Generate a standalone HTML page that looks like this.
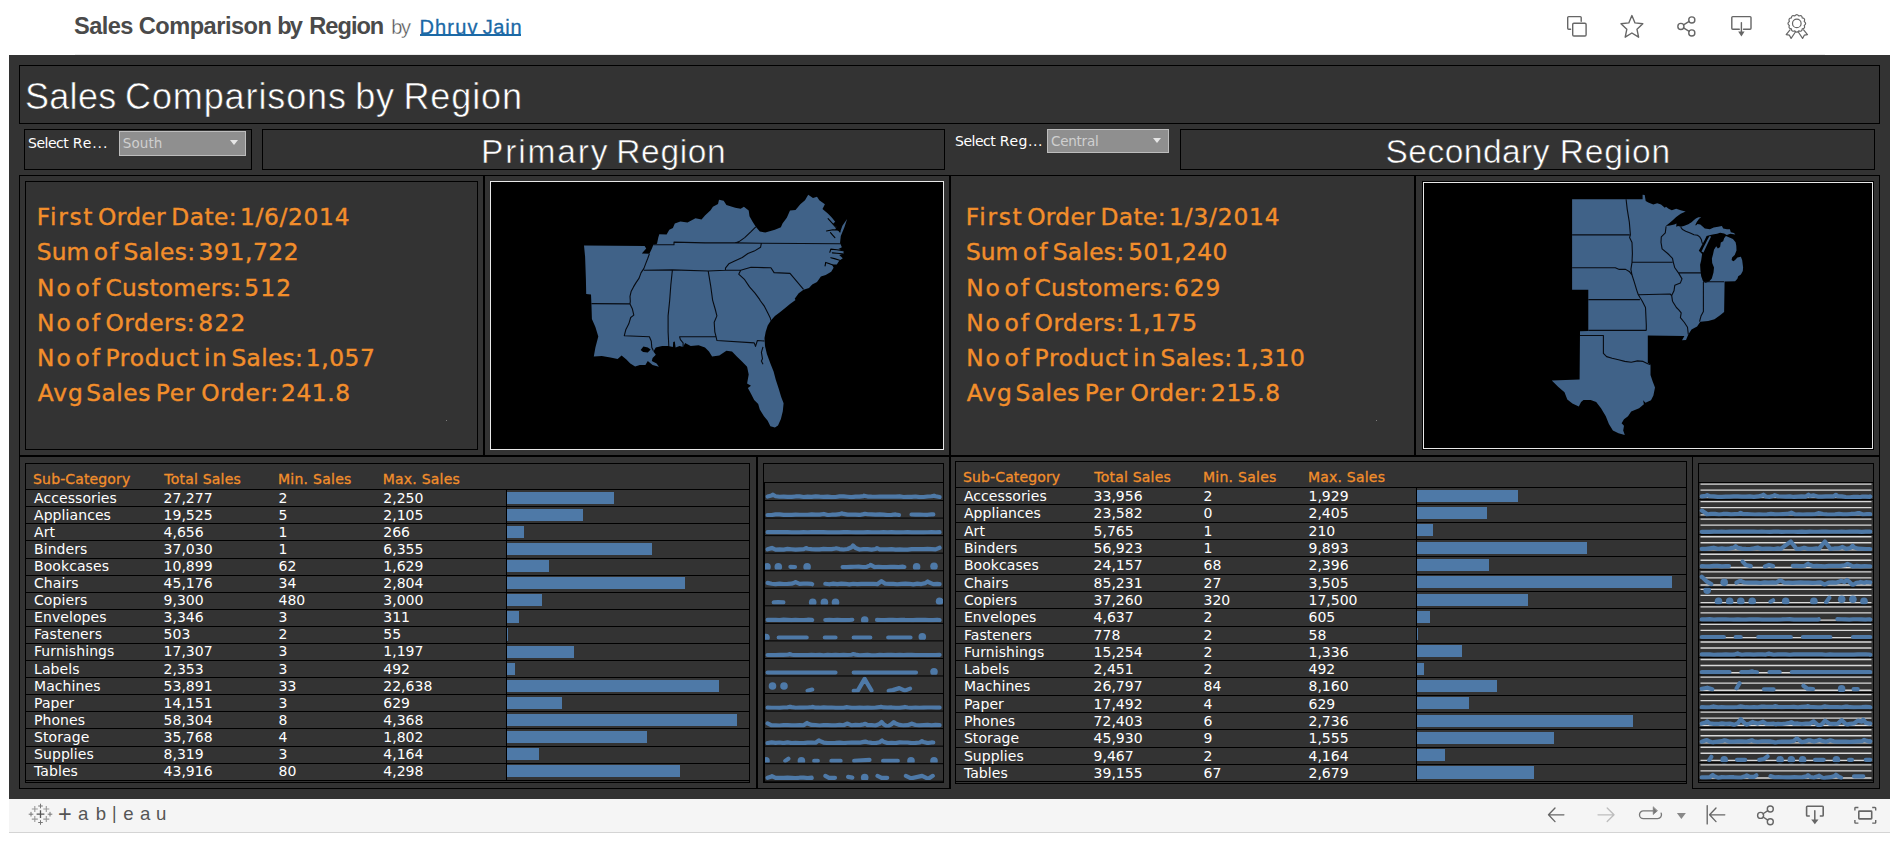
<!DOCTYPE html><html lang="en"><head><meta charset="utf-8"><title>Sales Comparison by Region</title>
<style>

html,body{margin:0;padding:0;}
body{width:1895px;height:850px;background:#fff;position:relative;overflow:hidden;font-family:"Liberation Sans","DejaVu Sans",sans-serif;}
.abs{position:absolute;}
.bx{position:absolute;box-sizing:border-box;border:1px solid #000000;}
.ln{position:absolute;background:#000000;}
.t{position:absolute;white-space:nowrap;line-height:1;}
.t span{position:absolute;top:0;white-space:nowrap;}
.lb{font-family:"Liberation Sans","DejaVu Sans",sans-serif;}
.dj{font-family:"DejaVu Sans","Liberation Sans",sans-serif;}
#dash{position:absolute;left:9px;top:55px;width:1881px;height:744px;background:#333333;}
#foot{position:absolute;left:9px;top:799px;width:1881px;height:33px;background:#f5f5f5;border-bottom:1px solid #d4d4d4;}
.stat{color:#f28e2b;font-size:23.3px;-webkit-text-stroke:0.4px #f28e2b;}
.cell{position:absolute;white-space:nowrap;line-height:1;font-family:"DejaVu Sans","Liberation Sans",sans-serif;font-size:14px;color:#fff;}
.hd{color:#f28e2b;-webkit-text-stroke:0.3px #f28e2b;}
.bar{position:absolute;background:#4e79a7;}
.dd{position:absolute;box-sizing:border-box;background:#8f8f8f;border:1px solid #bdbdbd;}

</style></head><body>
<div class="t  lb" style="left:0;top:14.62px;font-size:23.6px;font-weight:bold;color:#4a4a4a;"><span style="left:74.10px;letter-spacing:-0.571px;">Sales</span> <span style="left:138.70px;letter-spacing:-0.490px;">Comparison</span> <span style="left:277.20px;letter-spacing:-1.730px;">by</span> <span style="left:309.30px;letter-spacing:-0.996px;">Region</span></div>
<div class="t  lb" style="left:0;top:17.07px;font-size:20px;color:#555;-webkit-text-stroke:0.35px #fff;"><span style="left:391.30px;letter-spacing:-1.395px;">by</span></div>
<div class="t  lb" style="left:0;top:17.07px;font-size:20px;color:#1b69a6;-webkit-text-stroke:0.3px #1b69a6;"><span style="left:419.44px;letter-spacing:1.181px;">Dhruv</span> <span style="left:482.64px;letter-spacing:0.740px;">Jain</span></div>
<div class="abs" style="left:420px;top:34.4px;width:101px;height:1.7px;background:#1b69a6;"></div>
<div class="abs" style="left:75px;top:54px;width:1750px;height:1px;background:#ebebeb;"></div>
<div id="dash"></div>
<div class="bx" style="left:19px;top:65px;width:1861px;height:59px;"></div>
<div class="t  lb" style="left:0;top:78.53px;font-size:36px;color:#fff;-webkit-text-stroke:0.55px #333;"><span style="left:25.00px;letter-spacing:0.294px;">Sales</span> <span style="left:125.05px;letter-spacing:0.882px;">Comparisons</span> <span style="left:355.35px;letter-spacing:0.655px;">by</span> <span style="left:403.50px;letter-spacing:0.869px;">Region</span></div>
<div class="bx" style="left:24px;top:129px;width:228px;height:41px;"></div>
<div class="bx" style="left:262px;top:129px;width:683px;height:41px;"></div>
<div class="bx" style="left:1180px;top:129px;width:695px;height:41px;"></div>
<div class="t  dj" style="left:0;top:135.96px;font-size:14px;color:#fff;"><span style="left:28.00px;letter-spacing:-0.500px;">Select</span> <span style="left:72.75px;letter-spacing:0.900px;">Re...</span></div>
<div class="dd" style="left:119px;top:131px;width:127px;height:25px;"></div>
<div class="t  dj" style="left:0;top:137.18px;font-size:13.5px;color:#cfcfcf;"><span style="left:122.80px;letter-spacing:0.083px;">South</span></div>
<div class="abs" style="left:230px;top:140px;width:0;height:0;border-left:4px solid transparent;border-right:4px solid transparent;border-top:5.5px solid #e6e6e6;"></div>
<div class="t  dj" style="left:0;top:134.36px;font-size:14px;color:#fff;"><span style="left:955.00px;letter-spacing:-0.500px;">Select</span> <span style="left:999.75px;letter-spacing:0.560px;">Reg...</span></div>
<div class="dd" style="left:1047px;top:129px;width:122px;height:24px;"></div>
<div class="t  dj" style="left:0;top:134.58px;font-size:13.5px;color:#cfcfcf;"><span style="left:1051.10px;letter-spacing:-0.266px;">Central</span></div>
<div class="abs" style="left:1153px;top:138px;width:0;height:0;border-left:4px solid transparent;border-right:4px solid transparent;border-top:5.5px solid #e6e6e6;"></div>
<div class="t  lb" style="left:0;top:134.84px;font-size:33.5px;color:#fff;-webkit-text-stroke:0.55px #333;"><span style="left:481.12px;letter-spacing:1.821px;">Primary</span> <span style="left:616.23px;letter-spacing:0.675px;">Region</span></div>
<div class="t  lb" style="left:0;top:134.74px;font-size:33.5px;color:#fff;-webkit-text-stroke:0.55px #333;"><span style="left:1385.45px;letter-spacing:0.490px;">Secondary</span> <span style="left:1559.83px;letter-spacing:0.815px;">Region</span></div>
<div class="ln" style="left:19px;top:175px;width:1861px;height:1px;"></div>
<div class="ln" style="left:19px;top:455px;width:1861px;height:2px;"></div>
<div class="ln" style="left:19px;top:788px;width:931px;height:1px;"></div>
<div class="ln" style="left:1692px;top:788px;width:188px;height:1px;"></div>
<div class="ln" style="left:19px;top:175px;width:1px;height:614px;"></div>
<div class="ln" style="left:483px;top:175px;width:2px;height:281px;"></div>
<div class="ln" style="left:756px;top:456px;width:2px;height:333px;"></div>
<div class="ln" style="left:949px;top:175px;width:2px;height:614px;"></div>
<div class="ln" style="left:1414px;top:175px;width:2px;height:281px;"></div>
<div class="ln" style="left:1692px;top:456px;width:1px;height:333px;"></div>
<div class="ln" style="left:1879px;top:175px;width:1px;height:614px;"></div>
<div class="bx" style="left:25px;top:181px;width:453px;height:269px;"></div>
<div class="t stat dj" style="left:0;top:205.19px;font-size:23.3px;"><span style="left:36.73px;letter-spacing:1.686px;">First</span> <span style="left:98.08px;letter-spacing:0.321px;">Order</span> <span style="left:171.34px;letter-spacing:0.441px;">Date:</span> <span style="left:240.01px;letter-spacing:0.689px;">1/6/2014</span></div>
<div class="t stat dj" style="left:0;top:205.19px;font-size:23.3px;"><span style="left:965.84px;letter-spacing:1.686px;">First</span> <span style="left:1027.19px;letter-spacing:0.321px;">Order</span> <span style="left:1100.43px;letter-spacing:0.441px;">Date:</span> <span style="left:1169.12px;letter-spacing:0.831px;">1/3/2014</span></div>
<div class="t stat dj" style="left:0;top:240.29px;font-size:23.3px;"><span style="left:36.81px;letter-spacing:0.080px;">Sum</span> <span style="left:93.82px;letter-spacing:1.980px;">of</span> <span style="left:123.61px;letter-spacing:0.312px;">Sales:</span> <span style="left:198.60px;letter-spacing:0.617px;">391,722</span></div>
<div class="t stat dj" style="left:0;top:240.29px;font-size:23.3px;"><span style="left:965.91px;letter-spacing:0.080px;">Sum</span> <span style="left:1022.92px;letter-spacing:1.980px;">of</span> <span style="left:1052.72px;letter-spacing:0.312px;">Sales:</span> <span style="left:1128.30px;letter-spacing:0.467px;">501,240</span></div>
<div class="t stat dj" style="left:0;top:275.69px;font-size:23.3px;"><span style="left:37.04px;letter-spacing:1.985px;">No</span> <span style="left:75.42px;letter-spacing:1.980px;">of</span> <span style="left:105.48px;letter-spacing:0.260px;">Customers:</span> <span style="left:244.30px;letter-spacing:1.190px;">512</span></div>
<div class="t stat dj" style="left:0;top:275.69px;font-size:23.3px;"><span style="left:966.14px;letter-spacing:1.985px;">No</span> <span style="left:1004.52px;letter-spacing:1.980px;">of</span> <span style="left:1034.59px;letter-spacing:0.260px;">Customers:</span> <span style="left:1174.03px;letter-spacing:0.883px;">629</span></div>
<div class="t stat dj" style="left:0;top:310.99px;font-size:23.3px;"><span style="left:37.04px;letter-spacing:1.985px;">No</span> <span style="left:75.42px;letter-spacing:1.980px;">of</span> <span style="left:105.48px;letter-spacing:0.507px;">Orders:</span> <span style="left:198.27px;letter-spacing:1.303px;">822</span></div>
<div class="t stat dj" style="left:0;top:310.99px;font-size:23.3px;"><span style="left:966.14px;letter-spacing:1.985px;">No</span> <span style="left:1004.52px;letter-spacing:1.980px;">of</span> <span style="left:1034.59px;letter-spacing:0.507px;">Orders:</span> <span style="left:1127.52px;letter-spacing:0.686px;">1,175</span></div>
<div class="t stat dj" style="left:0;top:346.09px;font-size:23.3px;"><span style="left:37.04px;letter-spacing:1.985px;">No</span> <span style="left:75.42px;letter-spacing:1.980px;">of</span> <span style="left:105.44px;letter-spacing:0.777px;">Product</span> <span style="left:203.91px;letter-spacing:1.700px;">in</span> <span style="left:231.42px;letter-spacing:0.332px;">Sales:</span> <span style="left:305.81px;letter-spacing:0.591px;">1,057</span></div>
<div class="t stat dj" style="left:0;top:346.09px;font-size:23.3px;"><span style="left:966.14px;letter-spacing:1.985px;">No</span> <span style="left:1004.52px;letter-spacing:1.980px;">of</span> <span style="left:1034.54px;letter-spacing:0.777px;">Product</span> <span style="left:1133.01px;letter-spacing:1.700px;">in</span> <span style="left:1160.52px;letter-spacing:0.332px;">Sales:</span> <span style="left:1235.52px;letter-spacing:0.663px;">1,310</span></div>
<div class="t stat dj" style="left:0;top:381.29px;font-size:23.3px;"><span style="left:37.74px;letter-spacing:0.930px;">Avg</span> <span style="left:86.31px;letter-spacing:0.506px;">Sales</span> <span style="left:155.64px;letter-spacing:0.845px;">Per</span> <span style="left:201.28px;letter-spacing:0.623px;">Order:</span> <span style="left:281.06px;letter-spacing:0.584px;">241.8</span></div>
<div class="t stat dj" style="left:0;top:381.29px;font-size:23.3px;"><span style="left:966.84px;letter-spacing:0.930px;">Avg</span> <span style="left:1015.41px;letter-spacing:0.506px;">Sales</span> <span style="left:1084.74px;letter-spacing:0.845px;">Per</span> <span style="left:1130.38px;letter-spacing:0.623px;">Order:</span> <span style="left:1211.07px;letter-spacing:0.559px;">215.8</span></div>
<div class="abs" style="left:446px;top:420px;width:1px;height:1px;background:#7d7d7d;"></div><div class="abs" style="left:1376px;top:420px;width:1px;height:1px;background:#7d7d7d;"></div>
<div class="abs" id="map1" style="left:490px;top:181px;width:454px;height:269px;box-sizing:border-box;border:1px solid #e8e8e8;background:#000;overflow:hidden;">
<svg class="abs" style="left:0;top:0" width="452" height="267" viewBox="0 0 452 267"><path d="M93.0 63.6 L153.6 63.9 L155.2 66.4 L150.8 71.5 L158.4 71.8 L160.8 66.8 L162.4 62.8 L166.0 61.7 L167.3 55.6 L168.3 52.2 L175.6 52.5 L178.3 47.7 L181.9 46.1 L183.8 41.4 L189.4 39.4 L196.5 40.6 L204.5 36.3 L210.5 37.4 L214.0 33.4 L219.6 28.3 L221.9 24.7 L227.0 22.0 L228.0 17.8 L232.7 18.8 L235.4 23.1 L244.2 25.8 L249.7 26.7 L252.9 24.7 L257.7 28.6 L258.5 34.2 L261.6 39.8 L264.8 44.8 L268.8 49.6 L274.3 50.6 L283.9 47.7 L289.9 45.3 L291.5 41.4 L295.8 35.8 L299.0 28.6 L304.5 27.9 L309.3 22.3 L314.0 18.3 L317.2 12.8 L322.0 15.9 L326.0 14.7 L328.3 18.3 L333.9 22.3 L331.5 27.1 L337.1 31.8 L341.0 35.8 L344.2 39.8 L341.8 42.1 L345.8 45.3 L343.9 47.4 L347.4 48.5 L349.0 50.6 L351.4 43.7 L356.1 37.1 L353.4 45.3 L349.8 54.1 L349.0 61.2 L350.9 65.2 L347.4 67.1 L352.5 69.1 L352.5 71.5 L348.2 73.1 L351.8 76.3 L348.2 78.7 L345.8 82.6 L341.0 82.6 L342.6 85.8 L340.2 89.8 L334.7 93.0 L329.9 94.6 L326.0 100.1 L321.2 102.5 L318.0 106.1 L312.5 107.7 L307.7 111.2 L303.7 116.8 L304.5 118.0 L299.0 122.0 L294.2 125.9 L288.6 130.4 L283.9 133.9 L279.9 138.6 L276.7 143.4 L274.7 149.8 L273.5 156.1 L274.0 164.1 L275.9 172.0 L279.4 181.5 L282.6 189.5 L284.7 197.4 L287.8 206.9 L290.2 214.9 L292.6 221.2 L291.8 229.2 L289.9 237.1 L287.0 243.5 L283.9 245.4 L279.4 244.3 L276.7 238.7 L272.8 233.9 L268.8 227.6 L267.2 222.0 L263.2 218.1 L260.0 211.7 L256.9 206.1 L260.0 203.8 L256.1 201.4 L257.7 192.6 L256.1 184.7 L250.5 179.1 L245.8 174.4 L241.0 169.6 L235.4 168.8 L228.3 173.6 L221.1 174.4 L218.0 169.6 L214.0 165.6 L207.6 163.3 L199.7 164.1 L194.1 160.9 L192.1 164.9 L188.6 164.1 L184.6 165.6 L183.8 159.6 L182.2 160.1 L181.9 164.9 L177.5 164.1 L171.1 164.1 L164.8 165.6 L162.4 169.6 L164.8 172.8 L161.6 176.0 L160.8 179.1 L165.6 181.5 L167.9 184.7 L161.6 183.1 L156.8 179.1 L154.4 183.1 L148.9 183.1 L144.1 184.4 L139.3 181.5 L135.4 177.6 L130.6 173.6 L126.6 177.1 L119.5 175.5 L110.8 173.9 L102.8 174.4 L104.4 165.6 L107.3 154.5 L104.4 145.0 L100.9 137.1 L100.4 121.2 L100.4 121.6 L100.0 112.5 L95.2 112.0 L94.9 96.9 L94.1 74.7Z" fill="#406288" stroke="none"/><path d="M149.7 168.0 L152.4 164.5 L156.8 165.6 L159.7 167.6 L156.8 170.4 L152.1 170.1Z" fill="#000"/><path d="M100.4 121.6 L139.0 121.9 M158.4 71.8 L156.8 76.3 L154.9 81.1 L152.8 86.6 L150.1 90.6 L148.1 96.1 L144.9 100.9 L142.5 104.9 L140.1 109.6 L139.0 114.4 L139.3 119.2 L139.0 121.9 L141.3 126.7 L142.8 133.1 L139.7 135.5 L137.8 141.8 L134.9 147.4 L133.3 153.7 L158.4 154.8 L160.3 159.3 L160.8 165.6 L162.4 168.8 M162.4 62.8 L183.0 62.8 L183.0 60.1 L214.0 60.9 L244.2 60.9 L270.4 61.2 L349.0 61.7 M264.8 44.8 L260.0 49.6 L253.7 55.6 L248.1 59.6 L244.2 60.9 M270.4 61.2 L269.6 65.2 L263.2 69.1 L256.9 71.5 L251.3 75.5 L244.2 78.7 L237.8 81.8 L234.6 85.8 L234.3 88.2 M152.8 88.2 L181.4 87.9 L217.2 89.0 L234.3 88.2 L249.7 88.2 L260.0 85.3 L279.9 85.8 L283.1 90.6 L299.0 91.4 L312.5 107.3 M249.7 88.2 L247.7 92.2 L253.7 97.7 L258.5 104.9 L264.0 111.2 L268.8 117.6 L268.8 118.0 L273.5 124.4 L276.7 130.7 L279.4 136.3 L279.9 138.6 M181.4 87.9 L179.8 103.3 L178.7 118.1 L177.1 133.9 L177.1 149.8 L177.8 164.1 M217.2 89.0 L219.6 103.3 L221.6 118.1 L224.3 127.5 L225.9 133.9 L223.2 140.2 L223.8 149.8 L225.1 154.8 M225.1 154.8 L188.6 154.8 L189.4 157.7 L192.1 160.9 L192.1 164.9 M225.1 154.8 L225.9 158.5 L263.2 160.9 L264.5 164.4 L266.4 158.5 L273.5 159.0 M272.0 164.9 L270.4 170.4 L271.5 176.8 L270.4 179.1 L272.0 182.3" fill="none" stroke="#070b12" stroke-width="1.1" stroke-linejoin="round"/><path d="M349.0 49.9 L344.5 44.8 L340.7 40.6 L337.1 36.6 M347.7 48.0 L341.8 47.7 L335.5 49.0 M343.9 55.6 L341.4 52.8 L339.5 50.6 M352.2 68.7 L345.8 67.7 L339.8 67.1 L338.8 70.3 M351.5 71.8 L345.8 71.2 L341.4 70.9 M348.7 78.2 L343.4 76.6 L339.8 75.7 M341.8 83.0 L337.9 81.4 L334.7 80.4 L334.1 83.9" fill="none" stroke="#000" stroke-width="1.1" stroke-linejoin="round" stroke-linecap="round"/></svg>
</div>
<div class="abs" id="map2" style="left:1422px;top:181px;width:452px;height:269px;box-sizing:border-box;border:1px solid #000;background:#000;overflow:hidden;"><div class="abs" style="left:0;top:0;right:0;bottom:0;border:1px solid #e8e8e8;"></div>
<svg class="abs" style="left:0;top:0" width="450" height="267" viewBox="0 0 450 267"><path d="M149.1 17.2 L219.6 17.2 L219.6 12.8 L221.7 13.1 L222.7 19.0 L225.3 20.6 L230.3 22.5 L234.2 21.3 L238.0 22.5 L241.8 25.7 L243.0 24.8 L245.6 26.7 L248.8 28.2 L253.2 26.7 L257.7 28.2 L261.5 29.2 L262.7 29.6 L257.7 31.7 L253.2 34.9 L250.0 38.1 L246.2 41.3 L242.7 44.1 L246.9 43.5 L251.3 42.5 L253.5 41.5 L253.2 44.8 L255.1 44.1 L257.7 44.8 L260.8 44.1 L265.3 42.2 L268.5 40.3 L271.0 38.1 L272.9 36.5 L275.4 35.2 L278.3 35.2 L276.1 36.8 L273.9 39.7 L272.3 42.9 L272.9 43.5 L274.5 41.9 L277.3 42.5 L279.9 44.8 L281.8 46.4 L286.9 47.3 L290.7 45.4 L295.1 44.8 L298.9 44.1 L300.2 46.4 L304.0 47.3 L306.9 47.3 L307.8 50.2 L311.0 51.1 L312.3 52.4 L307.3 51.8 L303.8 52.9 L301.1 51.4 L297.1 50.8 L294.1 51.8 L291.0 52.3 L287.4 52.9 L283.6 53.9 L281.7 58.0 L279.5 62.0 L277.3 66.1 L275.8 68.8 L279.1 72.1 L278.2 78.3 L277.1 82.7 L277.5 88.9 L278.2 94.2 L280.1 99.5 L282.6 100.8 L286.1 99.5 L288.8 96.4 L290.5 90.6 L291.0 85.4 L289.2 80.9 L288.9 76.5 L290.1 72.1 L291.0 67.7 L293.2 64.2 L294.9 66.4 L297.1 65.1 L297.8 60.6 L300.2 59.3 L301.1 56.2 L302.9 54.0 L306.4 55.4 L309.9 57.1 L312.6 60.2 L313.3 63.7 L313.5 68.6 L311.7 73.0 L309.1 75.6 L308.6 77.9 L310.4 79.2 L312.1 77.9 L314.4 75.6 L317.9 74.8 L319.2 78.3 L320.1 85.4 L319.8 88.9 L317.9 92.4 L315.2 94.2 L314.4 96.8 L312.1 99.3 L301.6 99.5 L301.1 131.1 L301.1 130.1 L297.1 133.3 L291.5 137.3 L285.2 138.9 L277.3 139.7 L274.1 144.4 L268.5 147.6 L265.3 152.4 L263.0 157.9 L259.0 158.3 L261.4 154.0 L224.8 153.5 L224.8 181.0 L227.5 182.6 L227.5 192.9 L229.6 199.2 L232.0 205.6 L230.4 213.5 L228.0 218.3 L222.5 220.7 L220.1 218.3 L220.9 222.3 L216.1 226.2 L208.2 229.4 L205.0 234.2 L201.0 237.3 L198.6 241.3 L201.0 243.7 L200.2 248.5 L201.8 252.9 L195.5 251.3 L189.9 248.5 L185.9 242.1 L182.8 234.2 L178.0 226.2 L173.2 219.9 L167.7 218.0 L160.5 218.0 L158.1 219.9 L155.8 224.6 L149.4 221.5 L144.3 217.5 L141.5 210.3 L135.1 204.8 L128.8 198.4 L156.6 197.6 L157.0 149.2 L165.3 148.9 L165.3 107.7 L149.1 107.7Z" fill="#406288" stroke="none"/><path d="M278.5 69.5 L280.3 65.8 L282.4 61.7 L284.4 57.8 L286.4 54.3 L287.5 53.9 L287.9 55.0 L285.9 59.1 L283.4 64.2 L280.5 70.4Z" fill="#406288" stroke="none"/><path d="M149.1 52.9 L206.6 52.9 M149.1 85.8 L192.3 85.8 L196.3 87.4 L202.6 87.4 L206.6 89.8 L209.0 93.0 M165.3 117.6 L216.9 117.6 M203.1 17.2 L204.2 27.1 L206.3 39.8 L207.4 52.9 L206.6 55.6 L209.0 60.4 L209.4 71.5 L209.0 80.3 M209.0 80.3 L249.5 80.3 M209.0 80.3 L207.9 87.4 L209.0 93.0 L211.3 100.1 L213.7 108.1 L215.3 112.8 L219.3 119.2 L222.5 125.5 L223.3 143.0 L223.3 148.4 M215.3 112.8 L247.1 112.0 L248.7 113.6 M243.1 44.2 L242.3 50.9 L238.3 54.9 L238.0 60.4 L239.1 66.8 L244.7 71.5 L249.5 76.3 L250.3 80.3 L251.8 85.8 L255.8 91.4 L259.0 96.9 L257.4 100.9 L251.8 103.3 L251.0 108.8 L248.7 113.6 L249.5 119.2 L253.4 125.5 L255.8 127.8 L258.2 130.9 L257.4 135.7 L261.4 140.5 L264.5 145.2 L265.3 152.4 M255.8 90.9 L278.0 90.9 M257.7 45.1 L259.6 47.6 L262.7 49.2 L267.2 51.1 L271.0 52.7 L274.5 53.3 L276.7 54.9 L278.3 57.5 L278.9 60.0 L279.6 61.9 M280.4 100.1 L280.4 123.0 L280.4 129.4 L278.0 134.1 L276.5 139.7 M280.4 99.8 L301.1 99.8 M165.3 148.4 L223.3 148.4 M157.0 153.5 L180.4 153.5 L180.4 171.4 L183.6 174.6 L189.1 176.2 L195.5 177.8 L201.8 179.4 L208.2 180.2 L214.5 178.9 L220.1 179.4 L224.8 181.8 L227.5 182.6" fill="none" stroke="#070b12" stroke-width="1.1" stroke-linejoin="round"/></svg>
</div>
<div class="bx" style="left:25px;top:463px;width:725px;height:320px;"></div>
<div class="t hd dj" style="left:0;top:472.36px;font-size:14px;"><span style="left:33.10px;letter-spacing:0.136px;">Sub-Category</span> <span style="left:164.30px;letter-spacing:0.209px;">Total Sales</span> <span style="left:277.94px;letter-spacing:0.270px;">Min. Sales</span> <span style="left:382.75px;letter-spacing:0.214px;">Max. Sales</span></div>
<div class="ln" style="left:25px;top:489px;width:725px;height:1px;"></div>
<div class="ln" style="left:506px;top:489px;width:1px;height:291px;"></div>
<div class="ln" style="left:25px;top:506px;width:725px;height:1px;"></div>
<div class="cell" style="left:34.0px;top:490.6px;letter-spacing:0.08px;">Accessories</div>
<div class="cell" style="left:163.6px;top:490.6px;">27,277</div>
<div class="cell" style="left:278.5px;top:490.6px;">2</div>
<div class="cell" style="left:383.3px;top:490.6px;">2,250</div>
<div class="bar" style="left:507px;top:491.7px;width:106.7px;height:12.2px;"></div>
<div class="ln" style="left:25px;top:523px;width:725px;height:1px;"></div>
<div class="cell" style="left:34.0px;top:507.7px;letter-spacing:0.08px;">Appliances</div>
<div class="cell" style="left:163.6px;top:507.7px;">19,525</div>
<div class="cell" style="left:278.5px;top:507.7px;">5</div>
<div class="cell" style="left:383.3px;top:507.7px;">2,105</div>
<div class="bar" style="left:507px;top:508.8px;width:75.9px;height:12.2px;"></div>
<div class="ln" style="left:25px;top:540px;width:725px;height:1px;"></div>
<div class="cell" style="left:34.0px;top:524.8px;letter-spacing:0.08px;">Art</div>
<div class="cell" style="left:163.6px;top:524.8px;">4,656</div>
<div class="cell" style="left:278.5px;top:524.8px;">1</div>
<div class="cell" style="left:383.3px;top:524.8px;">266</div>
<div class="bar" style="left:507px;top:525.9px;width:16.9px;height:12.2px;"></div>
<div class="ln" style="left:25px;top:558px;width:725px;height:1px;"></div>
<div class="cell" style="left:34.0px;top:541.9px;letter-spacing:0.08px;">Binders</div>
<div class="cell" style="left:163.6px;top:541.9px;">37,030</div>
<div class="cell" style="left:278.5px;top:541.9px;">1</div>
<div class="cell" style="left:383.3px;top:541.9px;">6,355</div>
<div class="bar" style="left:507px;top:543.0px;width:145.4px;height:12.2px;"></div>
<div class="ln" style="left:25px;top:575px;width:725px;height:1px;"></div>
<div class="cell" style="left:34.0px;top:559.0px;letter-spacing:0.08px;">Bookcases</div>
<div class="cell" style="left:163.6px;top:559.0px;">10,899</div>
<div class="cell" style="left:278.5px;top:559.0px;">62</div>
<div class="cell" style="left:383.3px;top:559.0px;">1,629</div>
<div class="bar" style="left:507px;top:560.1px;width:41.7px;height:12.2px;"></div>
<div class="ln" style="left:25px;top:592px;width:725px;height:1px;"></div>
<div class="cell" style="left:34.0px;top:576.1px;letter-spacing:0.08px;">Chairs</div>
<div class="cell" style="left:163.6px;top:576.1px;">45,176</div>
<div class="cell" style="left:278.5px;top:576.1px;">34</div>
<div class="cell" style="left:383.3px;top:576.1px;">2,804</div>
<div class="bar" style="left:507px;top:577.1px;width:177.8px;height:12.2px;"></div>
<div class="ln" style="left:25px;top:609px;width:725px;height:1px;"></div>
<div class="cell" style="left:34.0px;top:593.2px;letter-spacing:0.08px;">Copiers</div>
<div class="cell" style="left:163.6px;top:593.2px;">9,300</div>
<div class="cell" style="left:278.5px;top:593.2px;">480</div>
<div class="cell" style="left:383.3px;top:593.2px;">3,000</div>
<div class="bar" style="left:507px;top:594.2px;width:35.3px;height:12.2px;"></div>
<div class="ln" style="left:25px;top:626px;width:725px;height:1px;"></div>
<div class="cell" style="left:34.0px;top:610.3px;letter-spacing:0.08px;">Envelopes</div>
<div class="cell" style="left:163.6px;top:610.3px;">3,346</div>
<div class="cell" style="left:278.5px;top:610.3px;">3</div>
<div class="cell" style="left:383.3px;top:610.3px;">311</div>
<div class="bar" style="left:507px;top:611.3px;width:11.7px;height:12.2px;"></div>
<div class="ln" style="left:25px;top:643px;width:725px;height:1px;"></div>
<div class="cell" style="left:34.0px;top:627.4px;letter-spacing:0.08px;">Fasteners</div>
<div class="cell" style="left:163.6px;top:627.4px;">503</div>
<div class="cell" style="left:278.5px;top:627.4px;">2</div>
<div class="cell" style="left:383.3px;top:627.4px;">55</div>
<div class="bar" style="left:507px;top:628.4px;width:1.0px;height:12.2px;"></div>
<div class="ln" style="left:25px;top:660px;width:725px;height:1px;"></div>
<div class="cell" style="left:34.0px;top:644.4px;letter-spacing:0.08px;">Furnishings</div>
<div class="cell" style="left:163.6px;top:644.4px;">17,307</div>
<div class="cell" style="left:278.5px;top:644.4px;">3</div>
<div class="cell" style="left:383.3px;top:644.4px;">1,197</div>
<div class="bar" style="left:507px;top:645.5px;width:67.1px;height:12.2px;"></div>
<div class="ln" style="left:25px;top:677px;width:725px;height:1px;"></div>
<div class="cell" style="left:34.0px;top:661.5px;letter-spacing:0.08px;">Labels</div>
<div class="cell" style="left:163.6px;top:661.5px;">2,353</div>
<div class="cell" style="left:278.5px;top:661.5px;">3</div>
<div class="cell" style="left:383.3px;top:661.5px;">492</div>
<div class="bar" style="left:507px;top:662.6px;width:7.8px;height:12.2px;"></div>
<div class="ln" style="left:25px;top:694px;width:725px;height:1px;"></div>
<div class="cell" style="left:34.0px;top:678.6px;letter-spacing:0.08px;">Machines</div>
<div class="cell" style="left:163.6px;top:678.6px;">53,891</div>
<div class="cell" style="left:278.5px;top:678.6px;">33</div>
<div class="cell" style="left:383.3px;top:678.6px;">22,638</div>
<div class="bar" style="left:507px;top:679.7px;width:212.4px;height:12.2px;"></div>
<div class="ln" style="left:25px;top:711px;width:725px;height:1px;"></div>
<div class="cell" style="left:34.0px;top:695.7px;letter-spacing:0.08px;">Paper</div>
<div class="cell" style="left:163.6px;top:695.7px;">14,151</div>
<div class="cell" style="left:278.5px;top:695.7px;">3</div>
<div class="cell" style="left:383.3px;top:695.7px;">629</div>
<div class="bar" style="left:507px;top:696.8px;width:54.6px;height:12.2px;"></div>
<div class="ln" style="left:25px;top:728px;width:725px;height:1px;"></div>
<div class="cell" style="left:34.0px;top:712.8px;letter-spacing:0.08px;">Phones</div>
<div class="cell" style="left:163.6px;top:712.8px;">58,304</div>
<div class="cell" style="left:278.5px;top:712.8px;">8</div>
<div class="cell" style="left:383.3px;top:712.8px;">4,368</div>
<div class="bar" style="left:507px;top:713.8px;width:229.9px;height:12.2px;"></div>
<div class="ln" style="left:25px;top:746px;width:725px;height:1px;"></div>
<div class="cell" style="left:34.0px;top:729.9px;letter-spacing:0.08px;">Storage</div>
<div class="cell" style="left:163.6px;top:729.9px;">35,768</div>
<div class="cell" style="left:278.5px;top:729.9px;">4</div>
<div class="cell" style="left:383.3px;top:729.9px;">1,802</div>
<div class="bar" style="left:507px;top:730.9px;width:140.4px;height:12.2px;"></div>
<div class="ln" style="left:25px;top:763px;width:725px;height:1px;"></div>
<div class="cell" style="left:34.0px;top:747.0px;letter-spacing:0.08px;">Supplies</div>
<div class="cell" style="left:163.6px;top:747.0px;">8,319</div>
<div class="cell" style="left:278.5px;top:747.0px;">3</div>
<div class="cell" style="left:383.3px;top:747.0px;">4,164</div>
<div class="bar" style="left:507px;top:748.0px;width:31.5px;height:12.2px;"></div>
<div class="ln" style="left:25px;top:780px;width:725px;height:1px;"></div>
<div class="cell" style="left:34.0px;top:764.1px;letter-spacing:0.08px;">Tables</div>
<div class="cell" style="left:163.6px;top:764.1px;">43,916</div>
<div class="cell" style="left:278.5px;top:764.1px;">80</div>
<div class="cell" style="left:383.3px;top:764.1px;">4,298</div>
<div class="bar" style="left:507px;top:765.1px;width:172.8px;height:12.2px;"></div>
<div class="bx" style="left:955px;top:461px;width:732px;height:323px;"></div>
<div class="t hd dj" style="left:0;top:470.36px;font-size:14px;"><span style="left:963.00px;letter-spacing:0.136px;">Sub-Category</span> <span style="left:1094.30px;letter-spacing:0.210px;">Total Sales</span> <span style="left:1202.94px;letter-spacing:0.270px;">Min. Sales</span> <span style="left:1307.94px;letter-spacing:0.214px;">Max. Sales</span></div>
<div class="ln" style="left:955px;top:487px;width:732px;height:1px;"></div>
<div class="ln" style="left:1416px;top:487px;width:1px;height:294px;"></div>
<div class="ln" style="left:955px;top:504px;width:732px;height:1px;"></div>
<div class="cell" style="left:963.9px;top:489.2px;letter-spacing:0.08px;">Accessories</div>
<div class="cell" style="left:1093.6px;top:489.2px;">33,956</div>
<div class="cell" style="left:1203.5px;top:489.2px;">2</div>
<div class="cell" style="left:1308.5px;top:489.2px;">1,929</div>
<div class="bar" style="left:1417px;top:489.7px;width:101.0px;height:12.2px;"></div>
<div class="ln" style="left:955px;top:522px;width:732px;height:1px;"></div>
<div class="cell" style="left:963.9px;top:506.4px;letter-spacing:0.08px;">Appliances</div>
<div class="cell" style="left:1093.6px;top:506.4px;">23,582</div>
<div class="cell" style="left:1203.5px;top:506.4px;">0</div>
<div class="cell" style="left:1308.5px;top:506.4px;">2,405</div>
<div class="bar" style="left:1417px;top:507.0px;width:69.9px;height:12.2px;"></div>
<div class="ln" style="left:955px;top:539px;width:732px;height:1px;"></div>
<div class="cell" style="left:963.9px;top:523.7px;letter-spacing:0.08px;">Art</div>
<div class="cell" style="left:1093.6px;top:523.7px;">5,765</div>
<div class="cell" style="left:1203.5px;top:523.7px;">1</div>
<div class="cell" style="left:1308.5px;top:523.7px;">210</div>
<div class="bar" style="left:1417px;top:524.3px;width:16.4px;height:12.2px;"></div>
<div class="ln" style="left:955px;top:556px;width:732px;height:1px;"></div>
<div class="cell" style="left:963.9px;top:541.0px;letter-spacing:0.08px;">Binders</div>
<div class="cell" style="left:1093.6px;top:541.0px;">56,923</div>
<div class="cell" style="left:1203.5px;top:541.0px;">1</div>
<div class="cell" style="left:1308.5px;top:541.0px;">9,893</div>
<div class="bar" style="left:1417px;top:541.6px;width:169.9px;height:12.2px;"></div>
<div class="ln" style="left:955px;top:574px;width:732px;height:1px;"></div>
<div class="cell" style="left:963.9px;top:558.3px;letter-spacing:0.08px;">Bookcases</div>
<div class="cell" style="left:1093.6px;top:558.3px;">24,157</div>
<div class="cell" style="left:1203.5px;top:558.3px;">68</div>
<div class="cell" style="left:1308.5px;top:558.3px;">2,396</div>
<div class="bar" style="left:1417px;top:558.9px;width:71.6px;height:12.2px;"></div>
<div class="ln" style="left:955px;top:591px;width:732px;height:1px;"></div>
<div class="cell" style="left:963.9px;top:575.6px;letter-spacing:0.08px;">Chairs</div>
<div class="cell" style="left:1093.6px;top:575.6px;">85,231</div>
<div class="cell" style="left:1203.5px;top:575.6px;">27</div>
<div class="cell" style="left:1308.5px;top:575.6px;">3,505</div>
<div class="bar" style="left:1417px;top:576.2px;width:254.8px;height:12.2px;"></div>
<div class="ln" style="left:955px;top:608px;width:732px;height:1px;"></div>
<div class="cell" style="left:963.9px;top:592.9px;letter-spacing:0.08px;">Copiers</div>
<div class="cell" style="left:1093.6px;top:592.9px;">37,260</div>
<div class="cell" style="left:1203.5px;top:592.9px;">320</div>
<div class="cell" style="left:1308.5px;top:592.9px;">17,500</div>
<div class="bar" style="left:1417px;top:593.5px;width:110.9px;height:12.2px;"></div>
<div class="ln" style="left:955px;top:626px;width:732px;height:1px;"></div>
<div class="cell" style="left:963.9px;top:610.2px;letter-spacing:0.08px;">Envelopes</div>
<div class="cell" style="left:1093.6px;top:610.2px;">4,637</div>
<div class="cell" style="left:1203.5px;top:610.2px;">2</div>
<div class="cell" style="left:1308.5px;top:610.2px;">605</div>
<div class="bar" style="left:1417px;top:610.8px;width:13.0px;height:12.2px;"></div>
<div class="ln" style="left:955px;top:643px;width:732px;height:1px;"></div>
<div class="cell" style="left:963.9px;top:627.5px;letter-spacing:0.08px;">Fasteners</div>
<div class="cell" style="left:1093.6px;top:627.5px;">778</div>
<div class="cell" style="left:1203.5px;top:627.5px;">2</div>
<div class="cell" style="left:1308.5px;top:627.5px;">58</div>
<div class="bar" style="left:1417px;top:628.1px;width:1.4px;height:12.2px;"></div>
<div class="ln" style="left:955px;top:660px;width:732px;height:1px;"></div>
<div class="cell" style="left:963.9px;top:644.8px;letter-spacing:0.08px;">Furnishings</div>
<div class="cell" style="left:1093.6px;top:644.8px;">15,254</div>
<div class="cell" style="left:1203.5px;top:644.8px;">2</div>
<div class="cell" style="left:1308.5px;top:644.8px;">1,336</div>
<div class="bar" style="left:1417px;top:645.3px;width:44.9px;height:12.2px;"></div>
<div class="ln" style="left:955px;top:677px;width:732px;height:1px;"></div>
<div class="cell" style="left:963.9px;top:662.1px;letter-spacing:0.08px;">Labels</div>
<div class="cell" style="left:1093.6px;top:662.1px;">2,451</div>
<div class="cell" style="left:1203.5px;top:662.1px;">2</div>
<div class="cell" style="left:1308.5px;top:662.1px;">492</div>
<div class="bar" style="left:1417px;top:662.6px;width:6.5px;height:12.2px;"></div>
<div class="ln" style="left:955px;top:695px;width:732px;height:1px;"></div>
<div class="cell" style="left:963.9px;top:679.4px;letter-spacing:0.08px;">Machines</div>
<div class="cell" style="left:1093.6px;top:679.4px;">26,797</div>
<div class="cell" style="left:1203.5px;top:679.4px;">84</div>
<div class="cell" style="left:1308.5px;top:679.4px;">8,160</div>
<div class="bar" style="left:1417px;top:679.9px;width:79.5px;height:12.2px;"></div>
<div class="ln" style="left:955px;top:712px;width:732px;height:1px;"></div>
<div class="cell" style="left:963.9px;top:696.7px;letter-spacing:0.08px;">Paper</div>
<div class="cell" style="left:1093.6px;top:696.7px;">17,492</div>
<div class="cell" style="left:1203.5px;top:696.7px;">4</div>
<div class="cell" style="left:1308.5px;top:696.7px;">629</div>
<div class="bar" style="left:1417px;top:697.2px;width:51.6px;height:12.2px;"></div>
<div class="ln" style="left:955px;top:729px;width:732px;height:1px;"></div>
<div class="cell" style="left:963.9px;top:714.0px;letter-spacing:0.08px;">Phones</div>
<div class="cell" style="left:1093.6px;top:714.0px;">72,403</div>
<div class="cell" style="left:1203.5px;top:714.0px;">6</div>
<div class="cell" style="left:1308.5px;top:714.0px;">2,736</div>
<div class="bar" style="left:1417px;top:714.5px;width:216.3px;height:12.2px;"></div>
<div class="ln" style="left:955px;top:747px;width:732px;height:1px;"></div>
<div class="cell" style="left:963.9px;top:731.3px;letter-spacing:0.08px;">Storage</div>
<div class="cell" style="left:1093.6px;top:731.3px;">45,930</div>
<div class="cell" style="left:1203.5px;top:731.3px;">9</div>
<div class="cell" style="left:1308.5px;top:731.3px;">1,555</div>
<div class="bar" style="left:1417px;top:731.8px;width:136.9px;height:12.2px;"></div>
<div class="ln" style="left:955px;top:764px;width:732px;height:1px;"></div>
<div class="cell" style="left:963.9px;top:748.6px;letter-spacing:0.08px;">Supplies</div>
<div class="cell" style="left:1093.6px;top:748.6px;">9,467</div>
<div class="cell" style="left:1203.5px;top:748.6px;">2</div>
<div class="cell" style="left:1308.5px;top:748.6px;">4,164</div>
<div class="bar" style="left:1417px;top:749.1px;width:27.5px;height:12.2px;"></div>
<div class="ln" style="left:955px;top:781px;width:732px;height:1px;"></div>
<div class="cell" style="left:963.9px;top:765.9px;letter-spacing:0.08px;">Tables</div>
<div class="cell" style="left:1093.6px;top:765.9px;">39,155</div>
<div class="cell" style="left:1203.5px;top:765.9px;">67</div>
<div class="cell" style="left:1308.5px;top:765.9px;">2,679</div>
<div class="bar" style="left:1417px;top:766.4px;width:116.6px;height:12.2px;"></div>
<div class="bx" style="left:763px;top:463px;width:181px;height:320px;"></div>
<div class="ln" style="left:763px;top:482px;width:181px;height:1px;"></div>
<div class="ln" style="left:764px;top:482px;width:1px;height:300px;"></div>
<div class="bx" style="left:1698px;top:463px;width:176px;height:320px;"></div>
<div class="ln" style="left:1698px;top:482px;width:176px;height:1px;"></div>
<svg class="abs" style="left:765px;top:482.76px" width="178" height="300" viewBox="765 482.76 178 300"><clipPath id="c765_0"><rect x="765" y="482.76" width="178" height="16.34"/></clipPath><g clip-path="url(#c765_0)"><path d="M767.6 496.25 L771.6 495.26 L772.7 494.49 L775.6 496.01 L779.6 496.50 L783.6 496.47 L787.6 496.61 L791.6 496.71 L795.6 496.22 L799.6 496.17 L803.6 496.74 L807.6 496.46 L811.6 496.69 L815.6 496.16 L819.6 496.47 L823.6 496.66 L827.6 496.31 L831.6 496.82 L835.6 496.78 L839.6 496.17 L843.6 496.17 L847.6 496.53 L851.6 496.81 L855.6 496.42 L859.6 496.31 L863.6 495.83 L864.0 495.47 L867.6 496.31 L871.6 496.46 L875.6 496.50 L879.6 496.32 L883.6 496.32 L887.6 496.31 L891.6 496.48 L895.6 496.36 L899.6 496.17 L903.6 496.74 L907.6 496.54 L911.6 496.60 L915.6 496.28 L919.6 496.85 L923.6 496.76 L927.6 496.24 L931.6 496.03 L934.0 495.46 L935.6 496.02 L939.6 496.81" fill="none" stroke="#4e79a7" stroke-width="4.2" stroke-linecap="round" stroke-linejoin="round"/></g><clipPath id="c765_1"><rect x="765" y="500.30" width="178" height="16.34"/></clipPath><g clip-path="url(#c765_1)"><path d="M767.6 514.77 L771.6 514.76 L775.6 514.14 L779.6 514.16 L783.6 514.68 L787.6 514.61 L791.6 514.57 L795.6 514.31 L799.6 514.52 L803.6 514.52 L807.6 514.50 L811.6 514.21 L815.6 514.40 L819.6 514.37 L823.6 513.72 L824.0 513.79 L827.6 514.76 L831.6 514.48 L835.6 514.41 L839.6 513.87 L841.6 513.12 L843.6 513.70 L847.6 514.42 L851.6 514.32 L855.6 514.36 L859.6 514.72 L863.6 513.88 L865.0 513.49 L867.6 514.03 L871.6 514.11 L875.6 514.32 L879.6 514.19 L883.6 514.45 L887.6 514.80 L891.6 514.57 L895.6 514.22 L899.0 514.72 M911.5 514.26 L915.5 514.48 L919.5 514.36 L923.5 514.52 L927.5 514.54 L931.5 514.14 L933.3 514.11" fill="none" stroke="#4e79a7" stroke-width="4.2" stroke-linecap="round" stroke-linejoin="round"/></g><clipPath id="c765_2"><rect x="765" y="517.85" width="178" height="16.34"/></clipPath><g clip-path="url(#c765_2)"><path d="M767.6 531.94 L771.6 531.91 L775.6 531.97 L779.6 531.92 L783.6 531.90 L787.6 531.97 L791.6 532.07 L795.6 532.05 L799.6 532.04 L803.6 531.93 L807.6 532.00 L811.6 531.95 L815.6 531.93 L819.6 531.91 L823.6 531.93 L827.6 532.08 L831.6 532.06 L835.6 532.05 L839.6 532.05 L843.6 531.93 L847.6 531.95 L851.6 532.02 L855.6 532.04 L859.6 532.06 L863.6 532.07 L867.6 531.91 L871.6 532.01 L875.6 532.02 L879.6 531.99 L883.6 531.93 L887.6 531.99 L891.6 531.91 L895.6 532.08 L899.6 532.06 L903.6 532.00 L907.6 531.95 L911.6 532.07 L915.6 532.01 L919.6 532.07 L923.6 532.06 L927.6 531.99 L931.6 531.97 L935.6 532.01 L939.6 531.98" fill="none" stroke="#4e79a7" stroke-width="4.2" stroke-linecap="round" stroke-linejoin="round"/></g><clipPath id="c765_3"><rect x="765" y="535.39" width="178" height="16.34"/></clipPath><g clip-path="url(#c765_3)"><path d="M767.6 549.12 L771.6 547.88 L772.0 547.74 L775.6 549.34 L779.6 549.20 L783.6 549.33 L787.6 548.70 L791.6 549.01 L795.6 549.34 L799.6 549.14 L803.6 549.02 L806.0 547.76 L807.6 548.48 L811.6 548.86 L815.6 549.06 L819.6 549.09 L823.6 548.69 L827.6 548.84 L831.6 548.88 L835.6 548.27 L836.0 548.02 L839.6 548.80 L843.6 549.24 L847.6 548.78 L851.6 547.00 L853.0 545.17 L855.6 547.84 L859.6 549.29 L863.6 548.83 L867.6 548.83 L871.6 549.37 L875.6 548.71 L877.0 547.89 L879.6 549.12 L883.6 549.06 L887.6 549.16 L891.6 548.83 L895.6 549.34 L899.6 549.17 L903.6 549.36 L907.6 549.31 L911.6 548.89 L915.6 548.94 L919.6 548.80 L923.6 548.79 L927.6 548.73 L931.6 548.90 L935.6 549.11 L939.6 547.49" fill="none" stroke="#4e79a7" stroke-width="4.2" stroke-linecap="round" stroke-linejoin="round"/></g><clipPath id="c765_4"><rect x="765" y="552.93" width="178" height="16.34"/></clipPath><g clip-path="url(#c765_4)"><circle cx="767.0" cy="566.68" r="3.8" fill="#4e79a7"/><circle cx="778.3" cy="566.68" r="3.8" fill="#4e79a7"/><circle cx="807.1" cy="566.68" r="3.8" fill="#4e79a7"/><circle cx="916.6" cy="566.68" r="3.8" fill="#4e79a7"/><circle cx="934.0" cy="566.18" r="3.8" fill="#4e79a7"/><path d="M790.4 566.68 L795.0 566.78 M842.6 566.88 L846.6 566.90 L850.6 566.67 L854.6 566.51 L858.6 566.33 L862.6 566.79 L866.6 566.66 L870.5 564.86 L870.6 564.65 L874.6 566.87 L878.6 566.52 L882.6 566.89 L886.6 566.84 L890.6 566.62 L894.6 566.70 L898.6 566.81 L902.6 566.46 L904.4 566.72" fill="none" stroke="#4e79a7" stroke-width="4.2" stroke-linecap="round" stroke-linejoin="round"/></g><clipPath id="c765_5"><rect x="765" y="570.48" width="178" height="16.34"/></clipPath><g clip-path="url(#c765_5)"><path d="M767.6 582.60 L771.6 583.48 L775.6 583.83 L779.6 583.42 L783.6 583.75 L787.6 583.63 L791.6 583.41 L795.5 582.13 L795.6 581.84 L799.6 583.67 L803.6 583.42 L807.6 583.43 L811.6 583.67 L812.2 583.95 M825.3 583.53 L829.3 584.04 L833.3 583.46 L837.3 583.86 L841.3 583.43 L845.3 583.54 L849.3 584.07 L853.3 583.52 L857.3 583.82 L861.3 583.69 L865.3 583.69 L869.3 583.72 L873.3 583.51 L877.3 583.95 L881.3 581.06 L881.6 580.94 L885.3 583.39 L889.3 583.56 L893.3 583.66 L897.3 584.00 L901.3 583.64 L905.3 583.45 L909.3 583.55 L913.3 584.07 L917.3 583.42 L921.3 583.81 L925.3 582.87 L927.7 581.23 L929.3 582.23 L933.3 583.86 L937.3 583.72 L939.6 583.83" fill="none" stroke="#4e79a7" stroke-width="4.2" stroke-linecap="round" stroke-linejoin="round"/></g><clipPath id="c765_6"><rect x="765" y="588.02" width="178" height="16.34"/></clipPath><g clip-path="url(#c765_6)"><circle cx="812.7" cy="602.16" r="3.8" fill="#4e79a7"/><circle cx="824.4" cy="602.16" r="3.8" fill="#4e79a7"/><circle cx="835.5" cy="602.16" r="3.8" fill="#4e79a7"/><circle cx="939.6" cy="600.96" r="3.8" fill="#4e79a7"/><path d="M773.7 602.16 L778.0 601.86 L783.4 602.16" fill="none" stroke="#4e79a7" stroke-width="4.2" stroke-linecap="round" stroke-linejoin="round"/></g><clipPath id="c765_7"><rect x="765" y="605.56" width="178" height="16.34"/></clipPath><g clip-path="url(#c765_7)"><circle cx="864.7" cy="619.71" r="3.8" fill="#4e79a7"/><path d="M767.6 619.69 L771.6 619.64 L775.6 619.53 L779.6 619.89 L783.6 619.46 L787.6 619.71 L791.6 619.91 L795.6 619.50 L799.6 619.74 L803.6 619.77 L807.6 619.48 L811.6 619.65 L812.2 619.81 M825.3 619.74 L829.3 619.67 L833.3 619.75 L837.3 619.56 L841.3 619.86 L845.3 619.87 L849.3 619.78 L852.3 619.54 M877.0 619.68 L881.0 619.74 L885.0 619.92 L889.0 619.69 L893.0 619.71 L897.0 619.75 L901.0 619.55 L905.0 619.71 L909.0 619.77 L913.0 619.85 L917.0 619.51 L921.0 619.61 L925.0 619.50 L929.0 619.86 L933.0 619.80 L937.0 619.48 L939.6 619.95" fill="none" stroke="#4e79a7" stroke-width="4.2" stroke-linecap="round" stroke-linejoin="round"/></g><clipPath id="c765_8"><rect x="765" y="623.11" width="178" height="16.34"/></clipPath><g clip-path="url(#c765_8)"><circle cx="766.0" cy="637.25" r="3.8" fill="#4e79a7"/><circle cx="922.3" cy="636.65" r="3.8" fill="#4e79a7"/><path d="M778.7 637.25 L806.7 637.25 M824.8 637.25 L835.5 637.25 M853.7 637.25 L870.3 637.25 M888.2 637.25 L910.5 637.25" fill="none" stroke="#4e79a7" stroke-width="4.2" stroke-linecap="round" stroke-linejoin="round"/></g><clipPath id="c765_9"><rect x="765" y="640.65" width="178" height="16.34"/></clipPath><g clip-path="url(#c765_9)"><path d="M767.6 654.78 L771.6 654.87 L775.6 654.88 L779.6 654.62 L783.6 654.55 L787.6 654.50 L790.0 653.88 L791.6 654.53 L795.6 654.89 L799.6 654.85 L803.6 654.82 L807.6 654.88 L811.6 654.62 L815.6 654.77 L819.6 654.63 L823.6 655.00 L827.6 654.57 L831.6 654.95 L835.6 654.58 L839.6 654.89 L843.6 654.71 L847.6 654.75 L851.6 654.50 L853.0 653.75 L855.6 654.39 L859.6 655.00 L863.6 654.80 L867.6 654.59 L871.6 655.04 L875.6 655.02 L879.6 654.60 L883.6 654.76 L887.6 654.61 L891.6 654.70 L895.6 654.86 L899.6 654.63 L903.6 654.89 L907.6 654.57 L911.6 654.63 L915.6 654.95 L919.6 654.75 L923.6 654.75 L927.6 654.84 L931.6 654.78 L935.6 654.74 L939.6 654.56" fill="none" stroke="#4e79a7" stroke-width="4.2" stroke-linecap="round" stroke-linejoin="round"/></g><clipPath id="c765_10"><rect x="765" y="658.20" width="178" height="16.34"/></clipPath><g clip-path="url(#c765_10)"><circle cx="934.0" cy="671.54" r="3.8" fill="#4e79a7"/><path d="M767.6 672.34 L835.5 672.34 M853.7 672.34 L916.0 672.34" fill="none" stroke="#4e79a7" stroke-width="4.2" stroke-linecap="round" stroke-linejoin="round"/></g><clipPath id="c765_11"><rect x="765" y="675.74" width="178" height="16.34"/></clipPath><g clip-path="url(#c765_11)"><circle cx="772.5" cy="685.78" r="3.8" fill="#4e79a7"/><circle cx="784.0" cy="685.78" r="3.8" fill="#4e79a7"/><path d="M807.6 690.48 L812.2 689.28 M853.7 690.58 L857.8 690.38 L864.6 678.68 L871.5 690.28 M888.7 690.68 L892.8 689.88 L899.3 687.88 L904.9 690.38 L910.0 688.38" fill="none" stroke="#4e79a7" stroke-width="4.2" stroke-linecap="round" stroke-linejoin="round"/></g><clipPath id="c765_12"><rect x="765" y="693.28" width="178" height="16.34"/></clipPath><g clip-path="url(#c765_12)"><path d="M767.6 707.31 L771.6 707.52 L775.6 707.52 L779.6 707.60 L783.6 707.27 L787.6 707.06 L790.0 706.45 L791.6 706.86 L795.6 707.54 L799.6 707.24 L803.6 707.44 L807.6 707.28 L811.6 706.91 L813.0 706.69 L815.6 707.43 L819.6 707.48 L823.6 707.18 L827.6 707.31 L831.6 707.25 L835.6 707.61 L839.6 707.58 L843.6 707.58 L847.0 706.89 L847.6 706.97 L851.6 707.65 L855.6 707.57 L859.6 707.30 L863.6 707.60 L867.6 707.42 L871.6 707.55 L875.6 707.46 L879.6 706.92 L881.0 706.56 L883.6 707.20 L887.6 707.33 L891.6 707.23 L895.6 707.59 L899.6 707.58 L903.6 707.20 L905.0 706.72 L907.6 707.26 L911.6 707.55 L915.6 707.24 L919.6 707.51 L923.6 707.40 L927.6 707.26 L931.6 707.28 L935.6 707.44 L939.6 707.30" fill="none" stroke="#4e79a7" stroke-width="4.2" stroke-linecap="round" stroke-linejoin="round"/></g><clipPath id="c765_13"><rect x="765" y="710.83" width="178" height="16.34"/></clipPath><g clip-path="url(#c765_13)"><path d="M767.6 723.09 L771.6 725.11 L775.6 725.08 L779.6 725.28 L783.6 724.81 L787.6 724.80 L791.6 725.13 L795.6 725.08 L799.6 724.83 L803.6 725.10 L807.0 722.70 L807.6 723.35 L811.6 724.70 L815.6 724.78 L819.6 725.25 L823.6 724.87 L827.6 724.80 L831.6 725.18 L835.6 725.06 L839.6 724.72 L843.6 725.01 L847.0 723.38 L847.6 723.33 L851.6 725.08 L855.6 724.71 L859.6 724.86 L863.6 724.11 L865.4 723.56 L867.6 724.88 L871.6 724.90 L875.6 725.31 L879.6 723.61 L881.6 721.84 L883.6 723.91 L887.6 726.56 L887.7 726.20 L891.6 723.90 L893.8 721.86 L895.6 723.24 L899.6 724.69 L903.6 725.23 L907.6 724.98 L911.6 723.43 L912.0 723.44 L915.6 724.77 L919.6 725.18 L923.6 724.97 L927.6 724.69 L931.6 725.19 L935.6 724.68 L939.6 724.82" fill="none" stroke="#4e79a7" stroke-width="4.2" stroke-linecap="round" stroke-linejoin="round"/></g><clipPath id="c765_14"><rect x="765" y="728.37" width="178" height="16.34"/></clipPath><g clip-path="url(#c765_14)"><path d="M767.6 742.84 L771.6 742.17 L775.6 742.68 L779.6 742.27 L783.6 742.85 L787.6 742.17 L791.6 742.78 L795.6 742.64 L799.6 742.76 L803.6 742.86 L807.6 742.33 L811.6 742.40 L815.6 742.53 L818.8 740.16 L819.6 740.66 L823.6 742.32 L827.6 742.76 L831.6 742.78 L835.6 742.72 L839.6 742.32 L843.6 742.81 L847.6 742.52 L851.6 742.32 L855.6 742.48 L859.6 742.46 L863.6 741.65 L865.4 741.36 L867.6 741.99 L871.6 742.56 L875.6 742.81 L879.6 742.03 L882.1 740.25 L883.6 741.54 L887.6 742.86 L891.6 742.51 L895.6 742.82 L899.6 742.18 L903.6 742.26 L907.6 742.28 L911.6 742.82 L915.6 742.65 L919.6 742.25 L922.0 740.96 L923.6 741.77 L927.6 742.78 L931.6 742.23 L933.3 742.24" fill="none" stroke="#4e79a7" stroke-width="4.2" stroke-linecap="round" stroke-linejoin="round"/></g><clipPath id="c765_15"><rect x="765" y="745.91" width="178" height="16.34"/></clipPath><g clip-path="url(#c765_15)"><circle cx="766.0" cy="760.66" r="3.8" fill="#4e79a7"/><circle cx="801.4" cy="760.66" r="3.8" fill="#4e79a7"/><circle cx="911.0" cy="760.66" r="3.8" fill="#4e79a7"/><circle cx="934.0" cy="760.66" r="3.8" fill="#4e79a7"/><path d="M785.3 760.66 L788.4 758.46 M814.2 760.66 L817.8 760.66 M831.4 760.66 L840.6 760.66 M854.2 760.66 L869.5 759.66 M883.1 760.66 L897.8 760.66" fill="none" stroke="#4e79a7" stroke-width="4.2" stroke-linecap="round" stroke-linejoin="round"/></g><clipPath id="c765_16"><rect x="765" y="763.46" width="178" height="16.34"/></clipPath><g clip-path="url(#c765_16)"><circle cx="864.7" cy="777.30" r="3.8" fill="#4e79a7"/><path d="M767.6 777.50 L771.6 776.17 L772.0 775.94 L775.6 777.56 L779.6 777.54 L783.6 777.71 L787.6 777.43 L791.6 777.69 L795.0 777.86 L795.6 777.96 L799.6 777.48 L803.6 777.35 L807.6 777.77 L811.6 777.47 L811.7 777.80 M825.4 775.60 L829.0 777.60 L835.0 777.60 M848.1 776.60 L852.3 777.40 M877.5 775.60 L881.6 777.60 L887.2 777.60 M905.9 775.60 L911.0 778.10 L922.1 775.60 L928.2 778.60 L932.8 775.60" fill="none" stroke="#4e79a7" stroke-width="4.2" stroke-linecap="round" stroke-linejoin="round"/></g><path d="M765 500.30H943 M765 517.85H943 M765 535.39H943 M765 552.93H943 M765 570.48H943 M765 588.02H943 M765 605.56H943 M765 623.11H943 M765 640.65H943 M765 658.20H943 M765 675.74H943 M765 693.28H943 M765 710.83H943 M765 728.37H943 M765 745.91H943 M765 763.46H943 M765 781.00H943" stroke="#000" stroke-width="1" fill="none"/></svg>
<svg class="abs" style="left:1699px;top:481.96px" width="174" height="300" viewBox="1699 481.96 174 300"><path d="M1700.5 484.06H1871.5 M1700.5 490.06H1871.5 M1700.5 497.26H1871.5 M1700.5 501.60H1871.5 M1700.5 507.60H1871.5 M1700.5 514.80H1871.5 M1700.5 519.15H1871.5 M1700.5 525.15H1871.5 M1700.5 532.35H1871.5 M1700.5 536.69H1871.5 M1700.5 542.69H1871.5 M1700.5 549.89H1871.5 M1700.5 554.23H1871.5 M1700.5 560.23H1871.5 M1700.5 567.43H1871.5 M1700.5 571.78H1871.5 M1700.5 577.78H1871.5 M1700.5 584.98H1871.5 M1700.5 589.32H1871.5 M1700.5 595.32H1871.5 M1700.5 602.52H1871.5 M1700.5 606.86H1871.5 M1700.5 612.86H1871.5 M1700.5 620.06H1871.5 M1700.5 624.41H1871.5 M1700.5 630.41H1871.5 M1700.5 637.61H1871.5 M1700.5 641.95H1871.5 M1700.5 647.95H1871.5 M1700.5 655.15H1871.5 M1700.5 659.50H1871.5 M1700.5 665.50H1871.5 M1700.5 672.70H1871.5 M1700.5 677.04H1871.5 M1700.5 683.04H1871.5 M1700.5 690.24H1871.5 M1700.5 694.58H1871.5 M1700.5 700.58H1871.5 M1700.5 707.78H1871.5 M1700.5 712.13H1871.5 M1700.5 718.13H1871.5 M1700.5 725.33H1871.5 M1700.5 729.67H1871.5 M1700.5 735.67H1871.5 M1700.5 742.87H1871.5 M1700.5 747.21H1871.5 M1700.5 753.21H1871.5 M1700.5 760.41H1871.5 M1700.5 764.76H1871.5 M1700.5 770.76H1871.5 M1700.5 777.96H1871.5" stroke="#d9d9d9" stroke-width="1.35" fill="none"/><g><path d="M1701.8 496.37 L1705.8 495.80 L1707.2 495.10 L1709.8 496.21 L1713.8 496.40 L1717.8 496.81 L1721.8 496.82 L1725.8 496.61 L1729.8 496.61 L1733.8 496.42 L1737.8 496.26 L1741.8 496.51 L1745.8 496.66 L1749.8 496.30 L1753.8 496.81 L1757.8 496.42 L1761.8 495.57 L1763.4 494.68 L1765.8 496.48 L1769.8 496.77 L1773.8 495.64 L1774.6 495.08 L1777.8 496.18 L1781.8 496.48 L1785.8 496.60 L1789.8 496.33 L1793.8 496.92 L1797.8 496.51 L1801.8 496.36 L1805.8 496.50 L1808.5 494.74 L1809.8 495.91 L1813.6 495.27 L1813.8 495.42 L1817.8 496.49 L1821.8 496.59 L1825.8 496.38 L1829.8 496.28 L1833.8 496.25 L1835.9 494.82 L1837.8 496.09 L1841.8 496.40 L1845.8 496.93 L1849.8 497.35 L1850.0 497.28 L1853.8 496.79 L1857.8 496.84 L1860.0 497.26 L1861.8 496.57 L1865.8 496.59 L1869.8 496.83 L1870.2 496.39" fill="none" stroke="#4e79a7" stroke-width="4.2" stroke-linecap="round" stroke-linejoin="round"/></g><g><path d="M1701.8 510.55 L1707.0 513.95 M1707.0 514.47 L1711.0 513.90 L1715.0 513.81 L1719.0 514.50 L1723.0 513.93 L1727.0 513.88 L1731.0 514.25 L1735.0 514.04 L1739.0 513.84 L1740.6 512.86 L1743.0 514.15 L1747.0 514.02 L1751.0 514.22 L1755.0 514.45 L1759.0 514.28 L1763.0 514.44 L1767.0 514.29 L1771.0 513.83 L1775.0 514.41 L1779.0 514.21 L1783.0 514.01 L1787.0 513.93 L1791.0 512.93 L1791.3 512.61 L1795.0 514.45 L1799.0 514.34 L1803.0 514.47 L1807.0 514.19 L1811.0 514.29 L1815.0 514.23 L1819.0 513.10 L1819.7 513.37 L1823.0 513.98 L1827.0 514.34 L1831.0 514.47 L1835.0 514.25 L1839.0 513.90 L1843.0 514.37 L1847.0 514.26 L1851.0 513.93 L1855.0 513.70 L1858.0 513.07 L1859.0 513.04 L1863.0 514.44 L1867.0 514.15 L1870.2 514.16" fill="none" stroke="#4e79a7" stroke-width="4.2" stroke-linecap="round" stroke-linejoin="round"/></g><g><path d="M1701.8 531.78 L1705.8 531.78 L1709.8 531.77 L1713.8 531.61 L1717.8 531.71 L1721.8 531.68 L1725.8 531.70 L1729.8 531.62 L1733.8 531.63 L1737.8 531.68 L1741.8 531.63 L1745.8 531.68 L1749.8 531.60 L1753.8 531.61 L1757.8 531.73 L1761.8 531.67 L1765.8 531.69 L1769.8 531.74 L1773.8 531.66 L1777.8 531.60 L1781.8 531.75 L1785.8 531.71 L1789.8 531.72 L1793.8 531.71 L1797.8 531.78 L1801.8 531.66 L1805.8 531.74 L1809.8 531.66 L1813.8 531.70 L1817.8 531.72 L1821.8 531.65 L1825.8 531.61 L1829.8 531.69 L1833.8 531.73 L1837.8 531.71 L1841.8 531.68 L1845.8 531.72 L1849.8 531.63 L1853.8 531.63 L1857.8 531.66 L1861.8 531.75 L1865.8 531.63 L1869.8 531.61 L1870.2 531.61" fill="none" stroke="#4e79a7" stroke-width="4.2" stroke-linecap="round" stroke-linejoin="round"/></g><g><path d="M1701.8 548.78 L1705.8 548.87 L1709.8 548.28 L1712.8 547.88 L1713.8 547.64 L1717.8 548.75 L1721.8 548.35 L1725.8 548.81 L1729.8 548.39 L1733.8 547.56 L1735.6 546.19 L1737.8 547.90 L1741.8 548.59 L1745.8 548.89 L1749.8 548.98 L1753.8 548.37 L1757.8 547.58 L1757.9 547.85 L1761.8 548.80 L1765.8 548.60 L1769.8 548.50 L1773.8 548.95 L1777.8 548.34 L1781.0 548.82 M1781.0 548.63 L1790.8 541.43 L1796.4 548.63 M1796.4 548.55 L1800.4 548.82 L1803.4 547.87 L1804.4 547.73 L1808.4 548.89 L1812.4 548.73 L1816.4 548.31 L1819.0 548.95 M1819.0 548.63 L1824.9 541.43 L1830.3 548.63 M1830.3 548.81 L1834.3 548.43 L1838.3 548.43 L1842.0 547.10 L1842.3 546.87 L1846.3 548.83 L1850.3 547.98 L1852.6 545.71 L1854.3 547.46 L1858.3 548.64 L1862.3 548.73 L1866.3 548.95 L1870.2 548.97" fill="none" stroke="#4e79a7" stroke-width="4.2" stroke-linecap="round" stroke-linejoin="round"/></g><g><path d="M1701.8 566.18 L1705.8 566.22 L1709.8 566.40 L1713.8 565.87 L1717.8 565.77 L1721.8 566.30 L1725.8 565.96 L1729.0 565.99 M1742.6 561.58 L1745.7 564.88 L1750.8 566.08 M1764.9 566.38 L1769.0 564.88 L1773.0 566.08 M1792.8 565.81 L1796.8 565.82 L1800.8 566.15 L1804.8 565.73 L1808.0 563.72 L1808.8 564.45 L1812.8 566.02 L1816.8 565.88 L1820.8 566.00 L1824.8 566.32 L1828.8 565.82 L1832.8 565.86 L1836.8 565.75 L1840.8 565.90 L1844.8 565.26 L1847.5 563.82 L1848.8 564.34 L1852.8 566.42 L1856.8 565.82 L1860.8 566.36 L1864.8 566.08 L1868.8 566.21 L1870.2 566.19" fill="none" stroke="#4e79a7" stroke-width="4.2" stroke-linecap="round" stroke-linejoin="round"/></g><g><circle cx="1724.2" cy="582.32" r="3.8" fill="#4e79a7"/><circle cx="1707.2" cy="590.22" r="3.8" fill="#4e79a7"/><path d="M1701.8 576.62 L1707.0 581.62 L1711.3 584.12 M1736.5 582.65 L1740.5 580.57 L1740.6 580.86 L1744.5 582.47 L1748.5 582.63 L1752.5 582.51 L1756.5 582.56 L1760.5 582.95 L1764.5 582.34 L1768.5 582.58 L1772.5 582.43 L1776.5 582.52 L1780.0 580.37 L1780.5 580.28 L1784.5 582.70 L1788.5 582.56 L1792.5 582.78 L1796.5 582.58 L1800.5 582.39 L1804.5 582.57 L1808.5 582.56 L1812.5 582.83 L1816.5 582.67 L1820.5 582.41 L1824.5 584.63 L1824.7 584.48 L1828.5 582.63 L1832.5 582.43 L1836.5 582.56 L1840.5 581.12 L1841.0 580.63 L1844.5 582.00 L1847.0 579.80 L1848.5 581.01 L1852.5 584.86 L1853.0 585.05 L1856.5 582.70 L1860.0 582.32 L1860.5 581.91 L1864.5 582.65 L1866.0 582.03 L1868.5 582.24 L1870.2 582.38" fill="none" stroke="#4e79a7" stroke-width="4.2" stroke-linecap="round" stroke-linejoin="round"/></g><g><circle cx="1718.5" cy="601.26" r="3.8" fill="#4e79a7"/><circle cx="1729.7" cy="601.26" r="3.8" fill="#4e79a7"/><circle cx="1740.8" cy="601.26" r="3.8" fill="#4e79a7"/><circle cx="1752.2" cy="601.26" r="3.8" fill="#4e79a7"/><circle cx="1785.7" cy="601.26" r="3.8" fill="#4e79a7"/><circle cx="1813.9" cy="601.26" r="3.8" fill="#4e79a7"/><circle cx="1841.7" cy="599.26" r="3.8" fill="#4e79a7"/><circle cx="1852.9" cy="599.26" r="3.8" fill="#4e79a7"/><circle cx="1864.0" cy="601.26" r="3.8" fill="#4e79a7"/><path d="M1770.5 601.76 L1773.1 600.26 M1826.2 602.26 L1829.3 597.76" fill="none" stroke="#4e79a7" stroke-width="4.2" stroke-linecap="round" stroke-linejoin="round"/></g><g><path d="M1701.8 619.43 L1705.8 619.30 L1709.8 619.17 L1713.8 619.49 L1717.8 619.26 L1721.8 619.29 L1725.8 619.36 L1729.8 619.48 L1733.8 619.65 L1737.8 619.39 L1741.8 619.65 L1745.8 619.65 L1749.8 619.28 L1753.8 619.19 L1757.8 619.24 L1761.8 619.58 L1765.8 619.46 L1769.8 619.62 L1773.8 619.64 L1777.8 619.49 L1781.8 619.43 L1785.8 619.19 L1789.8 619.17 L1793.8 619.56 L1797.8 619.49 L1801.8 619.54 L1805.8 619.44 L1809.8 619.50 L1813.8 619.48 L1817.8 619.61 L1818.7 619.21 M1837.4 619.16 L1841.4 619.21 L1845.4 619.35 L1849.4 619.50 L1853.4 619.23 L1857.4 619.21 L1861.4 619.27 L1865.4 619.54 L1869.4 619.23 L1870.2 619.53" fill="none" stroke="#4e79a7" stroke-width="4.2" stroke-linecap="round" stroke-linejoin="round"/></g><g><path d="M1701.8 636.95 L1723.9 636.95 M1735.7 636.95 L1740.7 636.95 M1758.3 636.95 L1790.8 636.95 M1802.9 636.95 L1830.3 636.95 M1853.0 636.95 L1870.2 636.95" fill="none" stroke="#4e79a7" stroke-width="4.2" stroke-linecap="round" stroke-linejoin="round"/></g><g><path d="M1701.8 654.28 L1705.8 654.35 L1709.8 654.40 L1713.8 654.70 L1717.8 654.49 L1721.8 654.61 L1725.8 654.30 L1729.8 654.50 L1733.8 654.67 L1737.6 653.41 L1737.8 653.68 L1741.8 654.69 L1745.8 654.43 L1749.8 654.25 L1753.8 654.62 L1757.8 654.31 L1761.8 654.25 L1765.8 654.55 L1769.0 653.57 L1769.8 653.82 L1773.8 654.72 L1777.8 654.35 L1781.8 654.29 L1785.8 654.31 L1789.8 654.73 L1793.8 654.30 L1797.8 654.33 L1801.8 654.26 L1805.8 654.27 L1809.8 654.26 L1813.8 654.42 L1817.8 654.33 L1821.8 654.40 L1825.8 654.71 L1829.8 654.33 L1833.8 654.65 L1837.8 654.61 L1841.8 654.53 L1845.8 654.53 L1849.8 654.63 L1853.8 654.54 L1857.8 654.36 L1861.8 654.41 L1865.8 654.37 L1869.8 654.45 L1870.2 654.74" fill="none" stroke="#4e79a7" stroke-width="4.2" stroke-linecap="round" stroke-linejoin="round"/></g><g><path d="M1701.8 672.04 L1729.5 672.04 M1741.4 672.07 L1745.4 672.09 L1749.4 672.02 L1752.0 671.35 L1753.4 671.75 L1756.9 672.20 M1769.5 672.04 L1779.7 672.04 M1791.8 672.04 L1870.2 672.04" fill="none" stroke="#4e79a7" stroke-width="4.2" stroke-linecap="round" stroke-linejoin="round"/></g><g><circle cx="1841.6" cy="688.88" r="3.8" fill="#4e79a7"/><path d="M1701.8 688.68 L1707.2 687.68 L1712.3 689.18 M1736.6 688.18 L1739.6 683.18 M1763.9 689.20 L1767.9 689.23 L1771.9 689.39 L1773.6 689.42 M1803.4 685.68 L1807.5 688.68 L1813.1 688.98 M1853.6 689.18 L1857.7 689.18" fill="none" stroke="#4e79a7" stroke-width="4.2" stroke-linecap="round" stroke-linejoin="round"/></g><g><path d="M1701.8 707.15 L1705.8 707.25 L1709.8 707.20 L1713.0 706.51 L1713.8 706.41 L1717.8 707.36 L1721.8 707.16 L1725.8 707.25 L1729.8 707.25 L1733.8 707.34 L1737.8 706.97 L1741.0 706.26 L1741.8 706.62 L1745.8 707.17 L1749.8 707.25 L1753.8 707.06 L1757.8 707.35 L1761.8 706.60 L1764.0 706.44 L1765.8 706.69 L1769.8 706.89 L1773.8 706.70 L1775.0 706.10 L1777.8 706.85 L1781.8 707.04 L1785.8 706.95 L1789.8 706.96 L1793.8 706.91 L1797.8 707.30 L1801.8 706.92 L1805.8 706.67 L1808.0 706.11 L1809.8 706.95 L1813.8 707.15 L1817.8 707.29 L1821.8 707.32 L1825.0 706.32 L1825.8 706.46 L1829.8 707.07 L1833.8 707.01 L1837.8 707.17 L1841.8 707.36 L1845.8 706.61 L1847.0 706.45 L1849.8 707.18 L1853.8 707.29 L1857.8 707.21 L1861.8 707.15 L1865.8 706.92 L1869.8 707.06 L1870.2 707.30" fill="none" stroke="#4e79a7" stroke-width="4.2" stroke-linecap="round" stroke-linejoin="round"/></g><g><path d="M1701.8 723.55 L1705.8 722.48 L1707.2 721.39 L1709.8 723.35 L1713.8 723.87 L1717.8 723.93 L1721.8 723.32 L1725.8 723.76 L1729.8 723.49 L1733.8 724.60 L1734.6 724.62 L1737.8 723.17 L1740.8 719.10 L1741.8 720.48 L1745.8 724.27 L1746.7 724.51 L1749.8 723.33 L1752.8 721.88 L1753.8 722.53 L1757.8 723.59 L1761.8 722.11 L1763.0 721.67 L1765.8 723.50 L1769.8 723.69 L1773.8 723.63 L1776.0 724.31 L1777.8 723.78 L1781.8 723.94 L1785.8 723.44 L1789.8 722.84 L1791.3 721.99 L1793.8 723.59 L1797.8 723.42 L1801.8 723.94 L1805.8 723.61 L1809.8 723.58 L1813.6 721.37 L1813.8 721.69 L1817.8 724.94 L1819.0 725.52 L1821.8 724.24 L1825.0 720.65 L1825.8 721.11 L1829.8 723.67 L1833.8 723.77 L1837.8 723.53 L1841.4 720.41 L1841.8 720.20 L1845.8 723.98 L1847.5 724.46 L1849.8 723.76 L1853.8 723.36 L1857.8 720.66 L1858.0 720.58 L1861.8 721.57 L1863.2 719.60 L1865.8 722.79 L1869.8 723.56 L1870.2 723.44" fill="none" stroke="#4e79a7" stroke-width="4.2" stroke-linecap="round" stroke-linejoin="round"/></g><g><path d="M1701.8 741.64 L1705.8 740.19 L1707.0 740.00 L1709.8 741.47 L1713.0 742.55 L1713.8 742.14 L1717.8 741.60 L1721.8 741.12 L1724.4 740.23 L1725.8 740.47 L1729.8 741.64 L1733.8 741.58 L1737.8 741.36 L1741.8 741.43 L1745.8 741.68 L1749.8 740.81 L1751.8 740.23 L1753.8 741.18 L1757.8 741.75 L1761.8 741.23 L1765.8 741.22 L1769.8 741.36 L1773.8 742.06 L1775.0 742.66 L1777.8 741.92 L1781.8 741.56 L1785.8 741.61 L1789.8 741.56 L1793.8 740.91 L1796.9 738.43 L1797.8 739.03 L1801.8 742.11 L1802.4 741.97 L1805.8 741.29 L1808.5 740.20 L1809.8 740.22 L1813.8 741.57 L1817.8 740.47 L1819.7 739.81 L1821.8 740.66 L1825.8 741.77 L1829.8 740.31 L1830.3 740.19 L1833.8 741.32 L1837.8 741.67 L1841.8 741.65 L1845.8 741.52 L1849.8 741.80 L1853.8 741.60 L1857.8 741.36 L1861.8 741.19 L1864.2 739.90 L1865.8 740.47 L1869.8 741.60 L1870.2 741.20" fill="none" stroke="#4e79a7" stroke-width="4.2" stroke-linecap="round" stroke-linejoin="round"/></g><g><circle cx="1724.2" cy="759.76" r="3.8" fill="#4e79a7"/><circle cx="1780.1" cy="759.76" r="3.8" fill="#4e79a7"/><circle cx="1791.3" cy="759.76" r="3.8" fill="#4e79a7"/><circle cx="1802.6" cy="759.76" r="3.8" fill="#4e79a7"/><circle cx="1836.4" cy="759.76" r="3.8" fill="#4e79a7"/><path d="M1709.2 760.06 L1711.3 756.76 M1737.0 759.76 L1745.2 759.76 M1759.3 759.76 L1764.0 758.96 L1767.5 756.26 M1815.0 759.76 L1823.7 759.76 M1849.0 759.76 L1852.0 759.76 M1865.7 759.76 L1870.2 759.76" fill="none" stroke="#4e79a7" stroke-width="4.2" stroke-linecap="round" stroke-linejoin="round"/></g><g><path d="M1701.8 777.40 L1705.8 777.25 L1709.8 777.21 L1712.8 774.90 L1713.8 775.96 L1717.8 777.64 L1718.3 777.88 L1721.8 777.07 L1725.8 777.19 L1729.8 777.14 L1733.8 777.18 L1737.8 777.46 L1741.8 777.28 L1745.8 776.08 L1746.7 775.26 L1749.8 776.92 L1753.8 776.88 L1756.4 775.22 M1770.5 776.10 L1774.5 777.22 L1778.5 777.09 L1782.5 777.23 L1786.5 777.34 L1790.5 777.40 L1794.5 777.13 L1798.5 777.20 L1802.5 777.07 L1806.5 776.35 L1808.0 775.06 L1810.5 777.01 L1813.6 777.50 L1814.5 777.32 L1818.5 775.98 L1819.2 775.65 L1822.5 777.65 L1824.7 778.06 L1826.5 777.54 L1830.5 777.16 L1834.5 775.92 L1835.9 774.67 L1838.5 776.52 L1841.0 777.67 M1854.0 776.30 L1863.3 776.30" fill="none" stroke="#4e79a7" stroke-width="4.2" stroke-linecap="round" stroke-linejoin="round"/></g><path d="M1699 499.50H1873 M1699 517.05H1873 M1699 534.59H1873 M1699 552.13H1873 M1699 569.68H1873 M1699 587.22H1873 M1699 604.76H1873 M1699 622.31H1873 M1699 639.85H1873 M1699 657.40H1873 M1699 674.94H1873 M1699 692.48H1873 M1699 710.03H1873 M1699 727.57H1873 M1699 745.11H1873 M1699 762.66H1873 M1699 780.20H1873" stroke="#000" stroke-width="1" fill="none"/></svg>
<div id="foot"></div>
<svg class="abs" style="left:0;top:0" width="1895" height="850" viewBox="0 0 1895 850" fill="none" stroke-linecap="round" stroke-linejoin="round"><path d="M1570.6 29.2H1568.7a1 1 0 0 1-1-1V17.6a1 1 0 0 1 1-1H1580.2a1 1 0 0 1 1 1V21.2" stroke="#666666" stroke-width="1.4"/><rect x="1572.7" y="23.3" width="13.4" height="12.7" rx="1.2" stroke="#666666" stroke-width="1.4"/><path d="M1631.9 15.6 L1635.0 22.9 L1642.8 23.7 L1637.0 29.3 L1638.6 37.2 L1631.9 33.0 L1625.2 37.2 L1626.8 29.3 L1621.0 23.7 L1628.8 22.9Z" stroke="#666666" stroke-width="1.4" stroke-linejoin="round"/><circle cx="1691.8" cy="19.9" r="3.05" stroke="#666666" stroke-width="1.4"/><circle cx="1680.9" cy="26.4" r="3.05" stroke="#666666" stroke-width="1.4"/><circle cx="1691.8" cy="32.9" r="3.05" stroke="#666666" stroke-width="1.4"/><path d="M1683.52 24.84L1689.18 21.46" stroke="#666666" stroke-width="1.4"/><path d="M1683.52 27.96L1689.18 31.34" stroke="#666666" stroke-width="1.4"/><path d="M1739.3 29.2H1732.8a1 1 0 0 1-1-1V17.6a1 1 0 0 1 1-1H1750a1 1 0 0 1 1 1V28.2a1 1 0 0 1-1 1H1743.5" stroke="#666666" stroke-width="1.4"/><path d="M1741.4 22.8V32" stroke="#666666" stroke-width="1.4"/><path d="M1738.2 31.6H1744.6L1741.4 36.4Z" fill="#666666" stroke="none"/><path d="M1798.79 15.96Q1801.90 14.57 1802.24 17.96Q1805.63 18.30 1804.24 21.41Q1807.00 23.40 1804.24 25.39Q1805.63 28.50 1802.24 28.84Q1801.90 32.23 1798.79 30.84Q1796.80 33.60 1794.81 30.84Q1791.70 32.23 1791.36 28.84Q1787.97 28.50 1789.36 25.39Q1786.60 23.40 1789.36 21.41Q1787.97 18.30 1791.36 17.96Q1791.70 14.57 1794.81 15.96Q1796.80 13.20 1798.79 15.96Z" stroke="#666666" stroke-width="1.2"/><circle cx="1796.8" cy="23.4" r="4.3" stroke="#666666" stroke-width="1.2"/><path d="M1790.0 29.8L1786.2 34.6L1789.4 35.2L1791.1 38.4L1795.4 32.0" stroke="#666666" stroke-width="1.2"/><path d="M1803.6 29.8L1807.5 34.6L1804.3 35.2L1802.6 38.4L1798.3 32.0" stroke="#666666" stroke-width="1.2"/><path d="M1563.9 814.8H1548.6M1555 808L1548.5 814.8L1555 821.6" stroke="#666666" stroke-width="1.35"/><path d="M1598 814.8H1613.9M1607.2 808L1614 814.8L1607.2 821.6" stroke="#bdbdbd" stroke-width="1.35"/><path d="M1653 810.8H1643.4a3.9 3.9 0 0 0 0 7.8H1657.6a3.9 3.9 0 0 0 3.6-5.4" stroke="#777" stroke-width="1.35"/><path d="M1653.2 807.1V814.6L1657.3 810.9Z" fill="#777" stroke="#777" stroke-width="0.6"/><path d="M1676.9 813H1685.9L1681.4 819Z" fill="#888" stroke="none"/><path d="M1707.2 805.6V823.9M1724.8 814.8H1709.8M1716 808L1709.6 814.8L1716 821.6" stroke="#666666" stroke-width="1.35"/><circle cx="1770.3" cy="809.0" r="3.0" stroke="#666666" stroke-width="1.4"/><circle cx="1760.6" cy="815.4" r="3.0" stroke="#666666" stroke-width="1.4"/><circle cx="1770.3" cy="821.7" r="3.0" stroke="#666666" stroke-width="1.4"/><path d="M1763.10 813.75L1767.80 810.65" stroke="#666666" stroke-width="1.4"/><path d="M1763.12 817.03L1767.78 820.07" stroke="#666666" stroke-width="1.4"/><path d="M1809.8 816H1807.4a0.8 0.8 0 0 1-0.8-0.8V807.1a0.8 0.8 0 0 1 0.8-0.8H1822.4a0.8 0.8 0 0 1 0.8 0.8V815.2a0.8 0.8 0 0 1-0.8 0.8H1819.8" stroke="#666666" stroke-width="1.6" stroke-linecap="butt"/><path d="M1814.8 810.8V820" stroke="#666666" stroke-width="1.5"/><path d="M1811.2 819.4H1818.5L1814.85 824.3Z" fill="#666666" stroke="none"/><rect x="1858.8" y="811.1" width="12.9" height="7.8" rx="0.6" stroke="#666666" stroke-width="1.6"/><path d="M1858.4 807.5H1855.6a0.7 0.7 0 0 0-0.7 0.7V810.6 M1872.2 807.5H1875a0.7 0.7 0 0 1 0.7 0.7V810.6 M1858.4 823.1H1855.6a0.7 0.7 0 0 1-0.7-0.7V820 M1872.2 823.1H1875a0.7 0.7 0 0 0 0.7-0.7V820" stroke="#666666" stroke-width="1.4" stroke-linecap="butt"/><path d="M36.6 814.2H44.4M40.5 810.3000000000001V818.1" stroke="#555" stroke-width="1.3" stroke-linecap="butt"/><path d="M38.2 806.0H42.8M40.5 803.7V808.3" stroke="#777" stroke-width="1.0" stroke-linecap="butt"/><path d="M38.2 822.5H42.8M40.5 820.2V824.8" stroke="#777" stroke-width="1.0" stroke-linecap="butt"/><path d="M28.7 814.2H33.3M31.0 811.9000000000001V816.5" stroke="#777" stroke-width="1.0" stroke-linecap="butt"/><path d="M47.7 814.2H52.3M50.0 811.9000000000001V816.5" stroke="#777" stroke-width="1.0" stroke-linecap="butt"/><path d="M31.799999999999997 809.0H37.8M34.8 806.0V812.0" stroke="#999" stroke-width="1.1" stroke-linecap="butt"/><path d="M43.3 809.0H49.3M46.3 806.0V812.0" stroke="#999" stroke-width="1.1" stroke-linecap="butt"/><path d="M31.799999999999997 819.1H37.8M34.8 816.1V822.1" stroke="#999" stroke-width="1.1" stroke-linecap="butt"/><path d="M43.3 819.1H49.3M46.3 816.1V822.1" stroke="#999" stroke-width="1.1" stroke-linecap="butt"/></svg>
<div class="t  lb" style="left:0;top:802.71px;font-size:23.5px;color:#555;"><span style="left:58.09px;letter-spacing:0.000px;">+</span></div>
<div class="t  lb" style="left:0;top:804.66px;font-size:18.6px;color:#555;"><span style="left:78.06px;letter-spacing:0.000px;">a</span> <span style="left:95.69px;letter-spacing:0.000px;">b</span> <span style="left:123.27px;letter-spacing:0.000px;">e</span> <span style="left:139.96px;letter-spacing:0.000px;">a</span> <span style="left:155.91px;letter-spacing:0.000px;">u</span></div>
<div class="t  lb" style="left:0;top:804.79px;font-size:17.5px;color:#555;"><span style="left:112.02px;letter-spacing:0.000px;">|</span></div>
</body></html>
